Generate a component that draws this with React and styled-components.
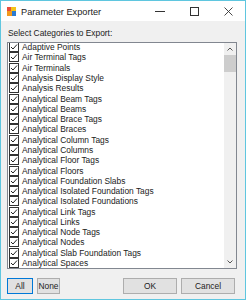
import styled, { createGlobalStyle } from 'styled-components';

const GlobalStyle = createGlobalStyle`
  html, body {
    margin: 0;
    padding: 0;
    background: #fff;
  }
  body {
    font-family: "Liberation Sans", Arial, sans-serif;
    font-size: 8.4px;
    color: #222;
  }
`;

const Window = styled.div`
  width: 246px;
  height: 300px;
  box-sizing: border-box;
  border: 1px solid #5fc6df;
  display: flex;
  flex-direction: column;
  background: #f0f0f0;
`;

const TitleBar = styled.div`
  height: 20px;
  background: #fff;
  display: flex;
  align-items: center;
  padding-left: 6px;
  flex-shrink: 0;
`;

const Title = styled.span`
  margin-left: 5px;
  font-size: 9.2px;
  flex: 1;
  padding-top: 1px;
`;

const WinButton = styled.div`
  width: 34px;
  height: 20px;
  display: flex;
  align-items: center;
  justify-content: center;
`;

const Body = styled.div`
  flex: 1;
  display: flex;
  flex-direction: column;
  padding: 6px 8px 5px 6px;
`;

const Label = styled.div`
  height: 15px;
  line-height: 13px;
  padding-left: 1px;
`;

const ListBox = styled.div`
  height: 227px;
  box-sizing: border-box;
  border: 1px solid #828790;
  background: #fff;
  display: flex;
  overflow: hidden;
  flex-shrink: 0;
`;

const Items = styled.div`
  flex: 1;
  margin-top: -1px;
  overflow: hidden;
`;

const Item = styled.div`
  height: 10.29px;
  line-height: 10px;
  display: flex;
  align-items: center;
  white-space: nowrap;
  overflow: hidden;
`;

const Check = styled.span`
  width: 8px;
  height: 8px;
  margin-left: 1px;
  margin-right: 3px;
  border: 1px solid #333;
  background: #fff;
  display: flex;
  align-items: center;
  justify-content: center;
  flex-shrink: 0;
`;

const ScrollBar = styled.div`
  width: 12px;
  background: #f0f0f0;
  display: flex;
  flex-direction: column;
`;

const Arrow = styled.div`
  height: 12px;
  display: flex;
  align-items: center;
  justify-content: center;
`;

const Track = styled.div`
  flex: 1;
`;

const Thumb = styled.div`
  height: 17px;
  background: #cdcdcd;
`;

const ButtonRow = styled.div`
  display: flex;
  margin-top: 9px;
  gap: 4px;
`;

const Button = styled.div`
  width: ${({ w }) => w}px;
  height: 16px;
  box-sizing: border-box;
  border: 1px solid ${({ primary }) => (primary ? '#0078d7' : '#adadad')};
  background: #e1e1e1;
  display: flex;
  align-items: center;
  justify-content: center;
  margin-left: ${({ gap }) => gap || 0}px;
`;

const items = [
  'Adaptive Points',
  'Air Terminal Tags',
  'Air Terminals',
  'Analysis Display Style',
  'Analysis Results',
  'Analytical Beam Tags',
  'Analytical Beams',
  'Analytical Brace Tags',
  'Analytical Braces',
  'Analytical Column Tags',
  'Analytical Columns',
  'Analytical Floor Tags',
  'Analytical Floors',
  'Analytical Foundation Slabs',
  'Analytical Isolated Foundation Tags',
  'Analytical Isolated Foundations',
  'Analytical Link Tags',
  'Analytical Links',
  'Analytical Node Tags',
  'Analytical Nodes',
  'Analytical Slab Foundation Tags',
  'Analytical Spaces',
];

function AppIcon() {
  return (
    <svg width="9" height="9" viewBox="0 0 9 9">
      <rect x="0" y="0" width="4" height="4" fill="#e84b3a" />
      <rect x="4" y="0" width="5" height="4" fill="#f3c318" />
      <rect x="0" y="4" width="5" height="5" fill="#f39a1e" />
      <rect x="5" y="4" width="4" height="5" fill="#2a7ad2" />
    </svg>
  );
}

function CheckMark() {
  return (
    <svg width="8" height="8" viewBox="0 0 8 8">
      <path d="M1 4 L3 6 L7 1.5" fill="none" stroke="#222" strokeWidth="1" />
    </svg>
  );
}

export default function App() {
  return (
    <>
      <GlobalStyle />
      <Window>
        <TitleBar>
          <AppIcon />
          <Title>Parameter Exporter</Title>
          <WinButton>
            <svg width="10" height="10" viewBox="0 0 10 10">
              <path d="M0 5.5 H10" stroke="#333" strokeWidth="1" />
            </svg>
          </WinButton>
          <WinButton>
            <svg width="9" height="9" viewBox="0 0 9 9">
              <rect x="0.5" y="0.5" width="8" height="8" fill="none" stroke="#333" strokeWidth="1" />
            </svg>
          </WinButton>
          <WinButton>
            <svg width="9" height="9" viewBox="0 0 9 9">
              <path d="M0.5 0.5 L8.5 8.5 M8.5 0.5 L0.5 8.5" stroke="#333" strokeWidth="0.9" />
            </svg>
          </WinButton>
        </TitleBar>
        <Body>
          <Label>Select Categories to Export:</Label>
          <ListBox>
            <Items>
              {items.map((name) => (
                <Item key={name}>
                  <Check>
                    <CheckMark />
                  </Check>
                  {name}
                </Item>
              ))}
            </Items>
            <ScrollBar>
              <Arrow>
                <svg width="6" height="4" viewBox="0 0 6 4">
                  <path d="M0.5 3.5 L3 1 L5.5 3.5" fill="none" stroke="#555" strokeWidth="1" />
                </svg>
              </Arrow>
              <Thumb />
              <Track />
              <Arrow>
                <svg width="6" height="4" viewBox="0 0 6 4">
                  <path d="M0.5 0.5 L3 3 L5.5 0.5" fill="none" stroke="#555" strokeWidth="1" />
                </svg>
              </Arrow>
            </ScrollBar>
          </ListBox>
          <ButtonRow>
            <Button w={26} primary>All</Button>
            <Button w={23}>None</Button>
            <Button w={54} gap={59}>OK</Button>
            <Button w={54}>Cancel</Button>
          </ButtonRow>
        </Body>
      </Window>
    </>
  );
}
